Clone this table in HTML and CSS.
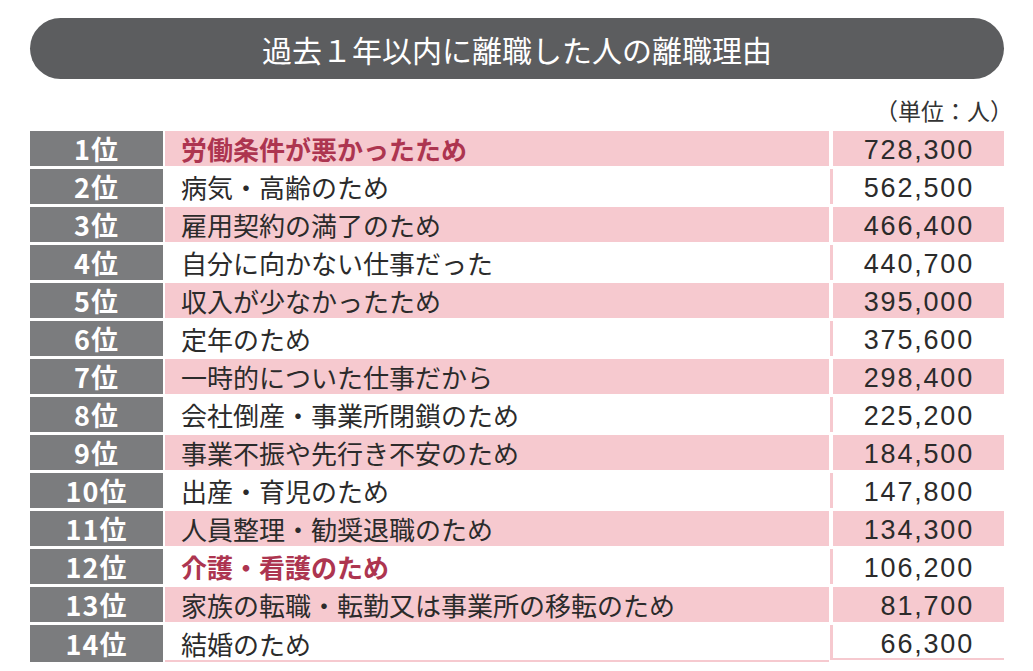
FILE: index.html
```html
<!DOCTYPE html>
<html lang="ja">
<head>
<meta charset="utf-8">
<link rel="stylesheet" href="styles.css">
</head>
<body>
<div class="page">
  <h1 class="title">過去１年以内に離職した人の離職理由</h1>
  <div class="unit">（単位：人）</div>
  <div class="table">
    <div class="row odd"><div class="rank">1位</div><div class="reason hl">労働条件が悪かったため</div><div class="num">728,300</div></div>
    <div class="row even"><div class="rank">2位</div><div class="reason">病気・高齢のため</div><div class="num">562,500</div></div>
    <div class="row odd"><div class="rank">3位</div><div class="reason">雇用契約の満了のため</div><div class="num">466,400</div></div>
    <div class="row even"><div class="rank">4位</div><div class="reason">自分に向かない仕事だった</div><div class="num">440,700</div></div>
    <div class="row odd"><div class="rank">5位</div><div class="reason">収入が少なかったため</div><div class="num">395,000</div></div>
    <div class="row even"><div class="rank">6位</div><div class="reason">定年のため</div><div class="num">375,600</div></div>
    <div class="row odd"><div class="rank">7位</div><div class="reason">一時的についた仕事だから</div><div class="num">298,400</div></div>
    <div class="row even"><div class="rank">8位</div><div class="reason">会社倒産・事業所閉鎖のため</div><div class="num">225,200</div></div>
    <div class="row odd"><div class="rank">9位</div><div class="reason">事業不振や先行き不安のため</div><div class="num">184,500</div></div>
    <div class="row even"><div class="rank">10位</div><div class="reason">出産・育児のため</div><div class="num">147,800</div></div>
    <div class="row odd"><div class="rank">11位</div><div class="reason">人員整理・勧奨退職のため</div><div class="num">134,300</div></div>
    <div class="row even"><div class="rank">12位</div><div class="reason hl">介護・看護のため</div><div class="num">106,200</div></div>
    <div class="row odd"><div class="rank">13位</div><div class="reason">家族の転職・転勤又は事業所の移転のため</div><div class="num">81,700</div></div>
    <div class="row even last"><div class="rank">14位</div><div class="reason">結婚のため</div><div class="num">66,300</div></div>
  </div>
</div>
</body>
</html>
```

FILE: styles.css
```css
html, body {
  margin: 0;
  padding: 0;
  background: #ffffff;
}

.page {
  width: 974px;
  padding: 18px 0 0 30px;
  font-family: "Noto Sans CJK JP", "Noto Sans", sans-serif;
  color: #2b2b2b;
}

.title {
  margin: 0;
  height: 61px;
  border-radius: 31px;
  background: #5c5d5f;
  color: #ffffff;
  font-size: 30px;
  font-weight: 400;
  display: flex;
  align-items: center;
  justify-content: center;
  line-height: 1;
}

.unit {
  margin-top: 20px;
  margin-right: -9px;
  height: 23px;
  line-height: 23px;
  font-size: 23px;
  text-align: right;
  color: #333333;
  margin-bottom: 9px;
}

.table {
  display: flex;
  flex-direction: column;
  gap: 3px;
}

.row {
  display: flex;
  height: 35px;
}

.rank {
  width: 133px;
  flex: none;
  background: #7b7c7e;
  color: #ffffff;
  font-weight: 700;
  font-size: 27px;
  display: flex;
  align-items: center;
  justify-content: center;
  letter-spacing: 1px;
  line-height: 1;
}

.reason {
  width: 648px;
  flex: none;
  margin-left: 2px;
  padding-left: 16px;
  font-size: 26px;
  display: flex;
  align-items: center;
  line-height: 1;
}

.reason.hl {
  color: #ad3550;
  font-weight: 700;
}

.num {
  width: 141px;
  flex: none;
  margin-left: 4px;
  padding-right: 30px;
  padding-top: 3px;
  box-sizing: content-box;
  font-family: "Liberation Sans", Arial, sans-serif;
  font-size: 27px;
  letter-spacing: 1.8px;
  display: flex;
  align-items: center;
  justify-content: flex-end;
  color: #2b2b2b;
  height: 32px;
}

.odd .reason,
.odd .num {
  background: #f6c9cf;
}

.even .num {
  margin-left: 1px;
  border-left: 3px solid #f6c9cf;
}

.last .reason,
.last .num {
  box-shadow: inset 0 -2px 0 #f6c9cf;
}

.last {
  height: 37px;
}
```
